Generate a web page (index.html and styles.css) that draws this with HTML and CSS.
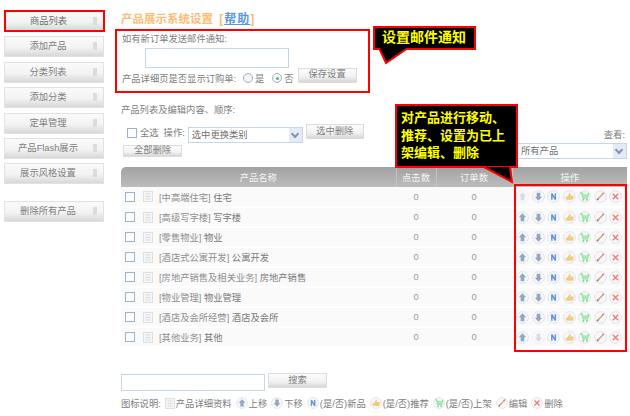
FILE: index.html
```html
<!DOCTYPE html>
<html lang="zh-CN">
<head>
    <meta charset="UTF-8">
    <title>产品展示系统设置</title>
    <link rel="stylesheet" href="styles.css">
</head>
<body>
    <svg class="defs" width="0" height="0">
        <symbol id="i-up" viewBox="0 0 14 14">
            <circle cx="7" cy="7" r="6.3" fill="#f8f8fa" stroke="#dfe1e6"/>
            <path d="M7 2.5 11 6.8H9V11H5V6.8H3Z" fill="#8fa9c0"/>
        </symbol>
        <symbol id="i-up-off" viewBox="0 0 14 14">
            <circle cx="7" cy="7" r="6.3" fill="#fafafa" stroke="#eeeeee"/>
            <path d="M7 2.5 11 6.8H9V11H5V6.8H3Z" fill="#d5dee8"/>
        </symbol>
        <symbol id="i-down" viewBox="0 0 14 14">
            <circle cx="7" cy="7" r="6.3" fill="#f8f8fa" stroke="#dfe1e6"/>
            <path d="M7 11.5 11 7.2H9V3H5V7.2H3Z" fill="#94a6bf"/>
        </symbol>
        <symbol id="i-down-off" viewBox="0 0 14 14">
            <circle cx="7" cy="7" r="6.3" fill="#fafafa" stroke="#eeeeee"/>
            <path d="M7 11.5 11 7.2H9V3H5V7.2H3Z" fill="#d5dee8"/>
        </symbol>
        <symbol id="i-new" viewBox="0 0 14 14">
            <circle cx="7" cy="7" r="6.3" fill="#f8f8fa" stroke="#dfe1e6"/>
            <path d="M4.4 10.5V3.5H6L8.2 7.4V3.5H9.8V10.5H8.2L6 6.6V10.5Z" fill="#6494d8"/>
        </symbol>
        <symbol id="i-thumb" viewBox="0 0 14 14">
            <circle cx="7" cy="7" r="6.3" fill="#f8f8fa" stroke="#dfe1e6"/>
            <path d="M3 7H5L7 3C8.2 3 8.4 4.2 8 5.8H11C11.6 6 11.6 6.8 11.2 7.2 11.6 7.8 11.4 8.6 10.9 8.9 11 9.6 10.6 10.4 10 10.5H5L3 10Z" fill="#f0cb80"/>
        </symbol>
        <symbol id="i-cart" viewBox="0 0 14 14">
            <circle cx="7" cy="7" r="6.3" fill="#f8f8fa" stroke="#dfe1e6"/>
            <path d="M2.5 3 4.5 3.5 5.5 8.5H10L11.5 3.2" fill="none" stroke="#84e094" stroke-width="1.5"/>
            <path d="M5 4.6H10.8L9.8 8H5.6Z" fill="#a8ecb2"/>
            <circle cx="5.8" cy="10.6" r="1.1" fill="#78d98a"/>
            <circle cx="9.6" cy="10.6" r="1.1" fill="#78d98a"/>
        </symbol>
        <symbol id="i-edit" viewBox="0 0 14 14">
            <circle cx="7" cy="7" r="6.3" fill="#f8f8fa" stroke="#dfe1e6"/>
            <path d="M3.5 10.5 9.5 4.2" stroke="#c9a27e" stroke-width="1.5"/>
            <path d="M9 4.6 10.6 3" stroke="#e07c76" stroke-width="1.7"/>
            <path d="M3.2 10.9 4.6 9.4" stroke="#6d7480" stroke-width="1.3"/>
        </symbol>
        <symbol id="i-del" viewBox="0 0 14 14">
            <circle cx="7" cy="7" r="6.3" fill="#f8f8fa" stroke="#dfe1e6"/>
            <path d="M4 4 10 10M10 4 4 10" stroke="#e8837a" stroke-width="1.6"/>
        </symbol>
        <symbol id="i-doc" viewBox="0 0 10 11">
            <rect x=".5" y=".5" width="9" height="10" fill="#f6f6f6" stroke="#e0e0e0"/>
            <path d="M2.5 3H7.5M2.5 5.5H7.5M2.5 8H7.5" stroke="#dadada"/>
        </symbol>
    </svg>

    <div class="page">
        <div class="sidebar">
            <div class="nav-item nav-current">商品列表</div>
            <div class="nav-item">添加产品</div>
            <div class="nav-item">分类列表</div>
            <div class="nav-item">添加分类</div>
            <div class="nav-item">定单管理</div>
            <div class="nav-item">产品Flash展示</div>
            <div class="nav-item">展示风格设置</div>
            <div class="nav-item nav-apart">删除所有产品</div>
        </div>

        <div class="main">
            <h1 class="title">产品展示系统设置 <span class="help">[<a href="#">帮助</a>]</span></h1>

            <div class="settings">
                <div class="label">如有新订单发送邮件通知:</div>
                <div class="email-row"><input type="text" class="email"></div>
                <div class="option-row">
                    <span class="option-text">产品详细页是否显示订购单:</span>
                    <span class="radio"></span><span>是</span>
                    <span class="radio radio-on"></span><span>否</span>
                    <button class="btn btn-save">保存设置</button>
                </div>
            </div>

            <div class="section-title">产品列表及编辑内容、顺序:</div>

            <div class="toolbar">
                <div class="tools-left">
                    <div class="tools-row">
                        <span class="check"></span><span>全选</span>
                        <span class="op-label">操作:</span>
                        <div class="select select-op">选中更换类别<i class="arrow"></i></div>
                        <button class="btn btn-small">选中删除</button>
                    </div>
                    <button class="btn btn-all">全部删除</button>
                </div>
                <div class="tools-right">
                    <div class="view-label">查看:</div>
                    <div class="select select-view">所有产品<i class="arrow"></i></div>
                </div>
            </div>

            <table class="products">
                <colgroup>
                    <col class="col-name"><col class="col-hits"><col class="col-orders"><col class="col-ops">
                </colgroup>
                <thead>
                    <tr><th>产品名称</th><th>点击数</th><th>订单数</th><th>操作</th></tr>
                </thead>
                <tbody id="rows"></tbody>
            </table>

            <div class="search">
                <input type="text" class="search-input">
                <button class="btn btn-search">搜索</button>
            </div>

            <div class="legend">
                <span>图标说明:</span>
                <span class="key"><svg class="doc"><use href="#i-doc"/></svg>产品详细资料</span>
                <span class="key"><svg class="ico"><use href="#i-up"/></svg>上移</span>
                <span class="key"><svg class="ico"><use href="#i-down"/></svg>下移</span>
                <span class="key"><svg class="ico"><use href="#i-new"/></svg>(是/否)新品</span>
                <span class="key"><svg class="ico"><use href="#i-thumb"/></svg>(是/否)推荐</span>
                <span class="key"><svg class="ico"><use href="#i-cart"/></svg>(是/否)上架</span>
                <span class="key"><svg class="ico"><use href="#i-edit"/></svg>编辑</span>
                <span class="key"><svg class="ico"><use href="#i-del"/></svg>删除</span>
            </div>
        </div>
    </div>

    <div class="ops-frame"></div>

    <div class="callout callout-mail">设置邮件通知</div>
    <svg class="tail tail-mail" width="32" height="18"><path d="M1 0 L8 15 L30 0" fill="#000" stroke="#f00" stroke-width="2"/></svg>

    <div class="callout callout-ops">对产品进行移动、<br>推荐、设置为已上<br>架编辑、删除</div>
    <svg class="tail tail-ops" width="34" height="18"><path d="M1 0 L29 15 L27 0" fill="#000" stroke="#f00" stroke-width="2"/></svg>

    <script>
        const products = [
            ['中高端住宅', '住宅'],
            ['高级写字楼', '写字楼'],
            ['零售物业', '物业'],
            ['酒店式公寓开发', '公寓开发'],
            ['房地产销售及相关业务', '房地产销售'],
            ['物业管理', '物业管理'],
            ['酒店及会所经营', '酒店及会所'],
            ['其他业务', '其他']
        ];

        function icon(name) {
            return `<svg class="ico"><use href="#i-${name}"/></svg>`;
        }

        let html = '';
        products.forEach((p, i) => {
            // 第一行不能上移，最后一行不能下移
            const up = i === 0 ? 'up-off' : 'up';
            const down = i === products.length - 1 ? 'down-off' : 'down';
            html += `<tr>
                <td><div class="name-cell"><span class="check"></span><svg class="doc"><use href="#i-doc"/></svg>
                <span><span class="cat">[${p[0]}]</span> ${p[1]}</span></div></td>
                <td class="num">0</td>
                <td class="num">0</td>
                <td><div class="ops">${[up, down, 'new', 'thumb', 'cart', 'edit', 'del'].map(icon).join('')}</div></td>
            </tr>`;
        });
        document.getElementById('rows').innerHTML = html;
    </script>
</body>
</html>
```

FILE: styles.css
```css
* {
    margin: 0;
    padding: 0;
    box-sizing: border-box;
}

body {
    font-family: "Liberation Sans", "Noto Sans CJK SC", sans-serif;
    font-size: 9.3px;
    color: #808080;
    background: white;
    overflow: hidden;
    height: 416px;
    position: relative;
}

.defs {
    position: absolute;
}

.page {
    display: flex;
    padding-top: 10px;
}

.sidebar {
    width: 121px;
    padding-left: 4px;
    flex-shrink: 0;
}

.nav-item {
    width: 100px;
    height: 21px;
    margin-bottom: 4.4px;
    padding-right: 12px;
    border: 1px solid #e2e2e2;
    background: linear-gradient(#fafafa, #f3f3f3 55%, #d8d8d8);
    text-align: center;
    line-height: 19px;
    color: #808080;
    position: relative;
}

.nav-item::after {
    content: "";
    position: absolute;
    right: 6px;
    top: 5px;
    width: 4px;
    height: 8px;
    background: #dcdcdc;
}

.nav-current {
    border: 2px solid #f00;
    height: 22px;
    width: 101px;
    line-height: 18px;
    color: #6e6e6e;
}

.nav-apart {
    margin-top: 17px;
}

.main {
    width: 506px;
    position: relative;
}

.title {
    font-size: 11.5px;
    font-weight: bold;
    color: #fbbd74;
    line-height: 15px;
    margin-top: 2px;
}

.help {
    margin-left: 3px;
    letter-spacing: 1px;
    font-size: 12px;
}

.help a {
    color: #5a97dc;
}

.settings {
    width: 255px;
    height: 64px;
    margin: 2px 0 0 -6px;
    padding: 2px 0 0 5px;
    border: 2px solid #f00;
}

.label {
    line-height: 13px;
}

.email-row {
    padding: 2px 0 0 23px;
}

.email {
    display: block;
    width: 144px;
    height: 20px;
    border: 1px solid #c5d6e4;
}

.option-row {
    display: flex;
    align-items: center;
    height: 20px;
    white-space: nowrap;
}

.option-text {
    width: 114px;
}

.radio {
    width: 10px;
    height: 10px;
    border: 1px solid #9db3c8;
    border-radius: 50%;
    background: #f4f6f8;
    margin: 0 2px 0 7px;
    position: relative;
}

.radio + span + .radio {
    margin-left: 8px;
}

.radio-on::after {
    content: "";
    position: absolute;
    left: 2.5px;
    top: 2.5px;
    width: 3px;
    height: 3px;
    border-radius: 50%;
    background: #5bb56a;
}

.btn {
    font-family: inherit;
    font-size: 9.3px;
    color: #808080;
    border: 1px solid #dcdcdc;
    background: linear-gradient(#fcfcfc, #f2f2f2 60%, #d6d6d6);
    line-height: 1;
}

.btn-save {
    width: 59px;
    height: 15px;
    margin: -6px 0 0 4px;
}

.section-title {
    margin-top: 11px;
    line-height: 13px;
}

.toolbar {
    display: flex;
    justify-content: space-between;
    height: 43px;
    margin-top: 7px;
}

.tools-row {
    display: flex;
    align-items: flex-start;
    height: 21px;
}

.check {
    display: inline-block;
    flex-shrink: 0;
    width: 10px;
    height: 10px;
    border: 1px solid #9bb4cc;
    background: #fdfdfd;
}

.tools-row .check {
    margin: 4px 3px 0 6px;
}

.tools-row > span {
    line-height: 18px;
}

.op-label {
    margin: 0 3px 0 5px;
}

.select {
    position: relative;
    border: 1px solid #c5d6e4;
    background: white;
    line-height: 14px;
    padding-left: 3px;
    color: #707070;
}

.select-op {
    width: 115px;
    height: 16px;
    margin-top: 3px;
}

.select-view {
    width: 110px;
    height: 16px;
}

.arrow {
    position: absolute;
    right: 0;
    top: 0;
    width: 13px;
    height: 14px;
    background: #e4ebf6;
}

.arrow::after {
    content: "";
    position: absolute;
    left: 3px;
    top: 3px;
    width: 4px;
    height: 4px;
    border-right: 2px solid #8295b8;
    border-bottom: 2px solid #8295b8;
    transform: rotate(45deg);
}

.btn-small {
    width: 58px;
    height: 15px;
    margin-left: 3px;
}

.btn-all {
    display: block;
    width: 59px;
    height: 12px;
    margin-left: 2px;
}

.tools-right {
    width: 110px;
    padding-top: 3px;
}

.view-label {
    text-align: right;
    padding-right: 2px;
    line-height: 16px;
}

.products {
    width: 506px;
    border-collapse: collapse;
    table-layout: fixed;
}

.col-name { width: 275px; }
.col-hits { width: 40px; }
.col-orders { width: 76px; }
.col-ops { width: 115px; }

.products th {
    height: 20px;
    font-weight: normal;
    color: #f5f5f5;
    background: linear-gradient(#a2a2a2, #bcbcbc);
    border-left: 1px solid #c4c4c4;
}

.products th:first-child {
    border-left: none;
    border-radius: 5px 0 0 0;
}

.products td {
    height: 20px;
    background: #fbfafb;
    border-bottom: 2px solid white;
}

.name-cell {
    display: flex;
    align-items: center;
    color: #787878;
}

.name-cell .check {
    margin-left: 4px;
}

.name-cell .doc {
    margin: 0 6px 0 8px;
}

.cat {
    color: #8e8e8e;
}

.doc {
    width: 10px;
    height: 11px;
}

.num {
    text-align: center;
    color: #999;
}

.ops {
    display: flex;
    gap: 2.5px;
    padding-left: 4px;
}

.ico {
    width: 13px;
    height: 13px;
    flex-shrink: 0;
}

.ops-frame {
    position: absolute;
    left: 514px;
    top: 184px;
    width: 113px;
    height: 168px;
    border: 2px solid #f00;
}

.search {
    display: flex;
    align-items: flex-start;
    margin-top: 26px;
}

.search-input {
    width: 144px;
    height: 17px;
    border: 1px solid #c5d6e4;
}

.btn-search {
    width: 59px;
    height: 15px;
    margin: -1px 0 0 3px;
}

.legend {
    display: flex;
    align-items: center;
    white-space: nowrap;
    margin-top: 5px;
    height: 14px;
}

.key {
    display: inline-flex;
    align-items: center;
    margin-left: 4px;
}

.key svg {
    margin-right: 1px;
}

.key .ico {
    width: 12px;
    height: 12px;
}

.callout {
    position: absolute;
    background: #000;
    border: 2px solid #f00;
    color: #ff0;
    font-weight: bold;
    z-index: 2;
}

.callout-mail {
    left: 373px;
    top: 26px;
    width: 103px;
    height: 24px;
    font-size: 14px;
    line-height: 18px;
    padding-left: 7px;
}

.callout-ops {
    left: 395px;
    top: 104px;
    width: 123px;
    height: 64px;
    font-size: 13px;
    line-height: 17.5px;
    padding: 3px 0 0 4px;
    white-space: nowrap;
}

.tail {
    position: absolute;
    z-index: 3;
}

.tail-mail {
    left: 378px;
    top: 48px;
}

.tail-ops {
    left: 483px;
    top: 167px;
}
```
